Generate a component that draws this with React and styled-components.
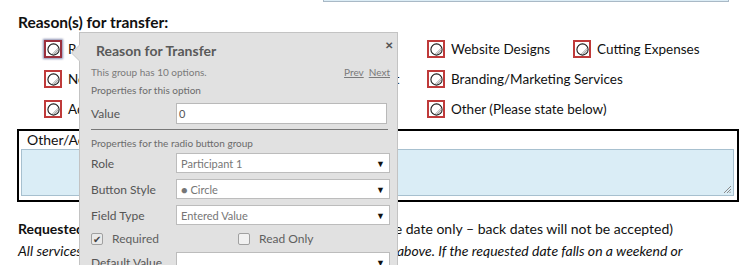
import React from 'react';
import styled, { createGlobalStyle } from 'styled-components';

const GlobalStyle = createGlobalStyle`
    body {
        margin: 0;
        background: #ffffff;
        overflow: hidden;
    }
`;

const Page = styled.div`
    position: relative;
    width: 751px;
    height: 265px;
    overflow: hidden;
    font-family: Lato, "Open Sans", sans-serif;
    font-size: 14px;
    color: #111;
`;

const TopField = styled.div`
    margin-left: 323px;
    width: 406px;
    height: 2px;
    box-sizing: border-box;
    background: #dcedf6;
    border: 1px solid #a9b9c6;
    border-top: none;
`;

const Heading = styled.div`
    margin: 11px 0 0 18px;
    font-size: 15.5px;
    font-weight: 700;
    line-height: 18px;
`;

const Options = styled.div`
    display: grid;
    grid-template-columns: 183px 200px 146px auto;
    grid-auto-rows: 18px;
    row-gap: 12px;
    margin: 9px 0 0 44px;
    font-size: 13.5px;
`;

const Option = styled.div`
    display: flex;
    align-items: center;
    gap: 6px;
    white-space: nowrap;
    line-height: 18px;
`;

const RadioBox = styled.span`
    display: flex;
    align-items: center;
    justify-content: center;
    flex: none;
    width: 18px;
    height: 18px;
    box-sizing: border-box;
    border: 2px solid ${props => props.focused ? '#9b2f3c' : '#bf3a3a'};
    background: #fff;
    box-shadow: ${props => props.focused ? '0 0 2px 1px #8a8fb0' : 'none'};
`;

const RadioIcon = () => (
    <svg width="13" height="13" viewBox="0 0 13 13">
        <circle cx="6.5" cy="6.5" r="5.6" fill="#fff" stroke="#1c1c1c" strokeWidth="1.1" />
        <g stroke="#8c8c8c" strokeWidth="0.8">
            <line x1="6.5" y1="11.6" x2="11.6" y2="6.5" />
            <line x1="8.4" y1="11.2" x2="11.2" y2="8.4" />
            <line x1="5" y1="11.4" x2="11.4" y2="5" />
        </g>
    </svg>
);

const OtherBox = styled.div`
    margin: 11px 0 0 17px;
    width: 722px;
    height: 73px;
    box-sizing: border-box;
    border: 2px solid #000;
    padding: 0 3px 4px 2px;
    display: flex;
    flex-direction: column;
`;

const OtherLabel = styled.div`
    margin-left: 6px;
    line-height: 18px;
`;

const TextField = styled.div`
    position: relative;
    flex: 1;
    background: #daedf6;
    border: 1px solid #a7c0cf;
`;

const Grip = styled.svg`
    position: absolute;
    right: 2px;
    bottom: 2px;
`;

const Para = styled.div`
    margin: 16px 0 0 18px;
    line-height: 22px;
    white-space: nowrap;
`;

const Line = styled.div`
    font-style: ${props => props.italic ? 'italic' : 'normal'};
`;

const Blank = styled.span`
    display: inline-block;
    width: ${props => props.w}px;
`;

/* popup editor */

const Popup = styled.div`
    position: absolute;
    left: 79px;
    top: 32px;
    width: 319px;
    height: 260px;
    box-sizing: border-box;
    background: #e1e1e1;
    border: 1px solid #c3c3c3;
    padding: 5px 7px 0 11px;
    font-family: Lato, "Open Sans", sans-serif;
    color: #5c5c5c;

    &::before, &::after {
        content: '';
        position: absolute;
        top: 11px;
        border-style: solid;
        border-color: transparent;
        border-width: 9px 9px 9px 0;
    }
    &::before {
        left: -9px;
        border-right-color: #c9c9c9;
    }
    &::after {
        left: -8px;
        border-right-color: #e1e1e1;
    }
`;

const PopupHeader = styled.div`
    display: flex;
    justify-content: space-between;
    align-items: flex-start;
`;

const PopupTitle = styled.div`
    margin: 3px 0 0 5px;
    font-size: 14px;
    font-weight: 700;
    line-height: 20px;
    color: #595959;
`;

const Close = styled.div`
    margin: 2px -3px 0 0;
    font-size: 10px;
    font-weight: 700;
    line-height: 10px;
    color: #555;
`;

const InfoRow = styled.div`
    display: flex;
    justify-content: space-between;
    margin-top: 4px;
    font-size: 10px;
    line-height: 14px;
    color: #7a7a7a;
`;

const NavLinks = styled.div`
    display: flex;
    gap: 5px;
    & span {
        text-decoration: underline;
    }
`;

const SubHead = styled.div`
    margin-top: ${props => props.mt}px;
    font-size: 10px;
    line-height: 14px;
    color: #6b6b6b;
`;

const FieldRow = styled.div`
    display: grid;
    grid-template-columns: 85px auto;
    align-items: center;
    margin-top: ${props => props.mt}px;
`;

const FieldLabel = styled.div`
    font-size: 12px;
    color: #555;
`;

const TextInput = styled.div`
    width: ${props => props.w}px;
    height: 21px;
    box-sizing: border-box;
    background: #fff;
    border: 1px solid #b9b9b9;
    padding-left: 2px;
    font-size: 11px;
    line-height: 19px;
    color: #555;
`;

const Select = styled.div`
    display: flex;
    justify-content: space-between;
    align-items: center;
    width: 214px;
    height: 20px;
    box-sizing: border-box;
    background: #fff;
    border: 1px solid #bcbcbc;
    padding: 0 4px 0 4px;
    font-size: 11px;
    color: #767676;
`;

const Arrow = styled.span`
    font-size: 9px;
    color: #111;
`;

const Divider = styled.div`
    margin-top: 5px;
    margin-right: 2px;
    height: 1px;
    background: #777;
`;

const CheckRow = styled.div`
    display: grid;
    grid-template-columns: 147px auto;
    margin-top: 7px;
    font-size: 12px;
    line-height: 14px;
    color: #5f5f5f;
`;

const Check = styled.div`
    display: flex;
    align-items: center;
    gap: 9px;
`;

const CheckBox = styled.span`
    display: flex;
    align-items: center;
    justify-content: center;
    width: 12px;
    height: 12px;
    box-sizing: border-box;
    border: 1px solid #a0a0a0;
    border-radius: 2px;
    background: ${props => props.checked ? '#e9e9e9' : '#f1f1f1'};
    font-size: 10px;
    color: #444;
`;

const leftOptions = ['Relocation', 'New Business Owner', 'Additional Services'];
const midOptions = ['Poor Service', 'Better Customer Support', 'Pricing'];
const rightOptions = ['Website Designs', 'Branding/Marketing Services', 'Other (Please state below)'];

export default function App() {
    const cells = [];
    for (let r = 0; r < 3; r++) {
        cells.push(
            <Option key={'a' + r}><RadioBox focused={r === 0}><RadioIcon /></RadioBox>{leftOptions[r]}</Option>,
            <Option key={'b' + r}><RadioBox><RadioIcon /></RadioBox>{midOptions[r]}</Option>,
            <Option key={'c' + r}><RadioBox><RadioIcon /></RadioBox>{rightOptions[r]}</Option>,
            r === 0
                ? <Option key="d0"><RadioBox><RadioIcon /></RadioBox>Cutting Expenses</Option>
                : <span key={'d' + r} />
        );
    }

    return (
        <Page>
            <GlobalStyle />
            <TopField />
            <Heading>Reason(s) for transfer:</Heading>
            <Options>{cells}</Options>

            <OtherBox>
                <OtherLabel>Other/Additional Information:</OtherLabel>
                <TextField>
                    <Grip width="8" height="8" viewBox="0 0 8 8">
                        <g stroke="#8a8a8a" strokeWidth="1">
                            <line x1="1" y1="8" x2="8" y2="1" />
                            <line x1="4" y1="8" x2="8" y2="4" />
                            <line x1="6.5" y1="8" x2="8" y2="6.5" />
                        </g>
                    </Grip>
                </TextField>
            </OtherBox>

            <Para>
                <Line>
                    <b>Requested Transfer Date:</b>
                    <Blank w={93} />
                    (Please select a future date only – back dates will not be accepted)
                </Line>
                <Line italic>
                    All services will be transferred on the date specified in the section above. If the requested date falls on a weekend or
                </Line>
                <Line italic>
                    holiday, the transfer will take place on the next business day. To help ensure a smooth transfer, please
                </Line>
            </Para>

            <Popup>
                <PopupHeader>
                    <PopupTitle>Reason for Transfer</PopupTitle>
                    <Close>✕</Close>
                </PopupHeader>
                <InfoRow>
                    <span>This group has 10 options.</span>
                    <NavLinks><span>Prev</span><span>Next</span></NavLinks>
                </InfoRow>
                <SubHead mt={4}>Properties for this option</SubHead>
                <FieldRow mt={6}>
                    <FieldLabel>Value</FieldLabel>
                    <TextInput w={211}>0</TextInput>
                </FieldRow>
                <Divider />
                <SubHead mt={6}>Properties for the radio button group</SubHead>
                <FieldRow mt={3}>
                    <FieldLabel>Role</FieldLabel>
                    <Select>Participant 1<Arrow>▼</Arrow></Select>
                </FieldRow>
                <FieldRow mt={6}>
                    <FieldLabel>Button Style</FieldLabel>
                    <Select>● Circle<Arrow>▼</Arrow></Select>
                </FieldRow>
                <FieldRow mt={6}>
                    <FieldLabel>Field Type</FieldLabel>
                    <Select>Entered Value<Arrow>▼</Arrow></Select>
                </FieldRow>
                <CheckRow>
                    <Check><CheckBox checked>✔</CheckBox>Required</Check>
                    <Check><CheckBox />Read Only</Check>
                </CheckRow>
                <FieldRow mt={6}>
                    <FieldLabel>Default Value</FieldLabel>
                    <Select><span /><Arrow>▼</Arrow></Select>
                </FieldRow>
            </Popup>
        </Page>
    );
}
